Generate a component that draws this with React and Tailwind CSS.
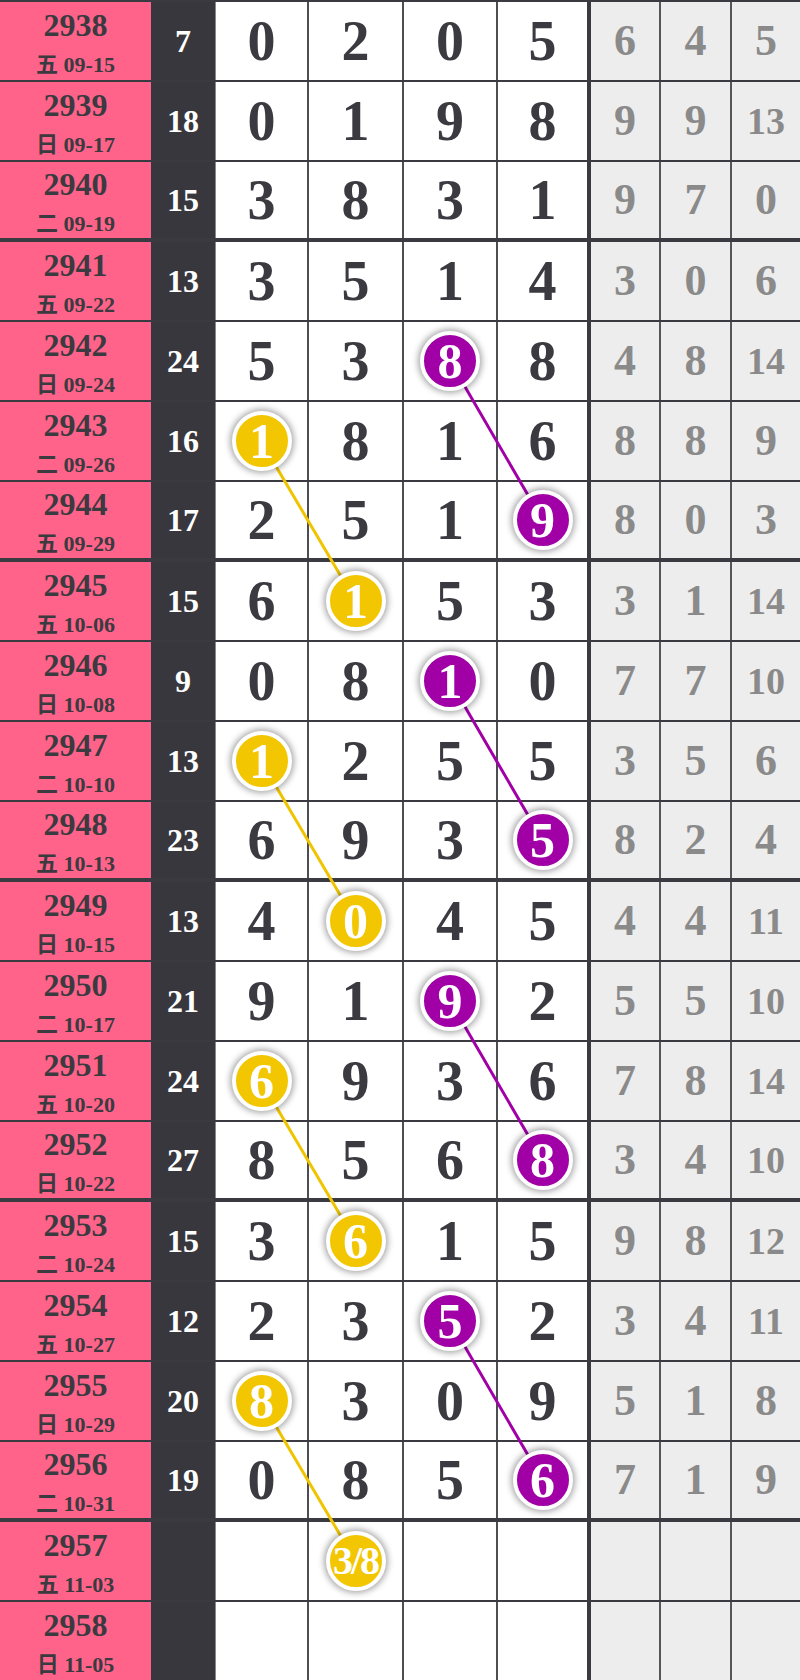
import React from "react"
import clsx from "clsx"

const rows = [
  ["2938", "五", "09-15", "7", ["0", "2", "0", "5"], ["6", "4", "5"]],
  ["2939", "日", "09-17", "18", ["0", "1", "9", "8"], ["9", "9", "13"]],
  ["2940", "二", "09-19", "15", ["3", "8", "3", "1"], ["9", "7", "0"]],
  ["2941", "五", "09-22", "13", ["3", "5", "1", "4"], ["3", "0", "6"]],
  ["2942", "日", "09-24", "24", ["5", "3", "p8", "8"], ["4", "8", "14"]],
  ["2943", "二", "09-26", "16", ["y1", "8", "1", "6"], ["8", "8", "9"]],
  ["2944", "五", "09-29", "17", ["2", "5", "1", "p9"], ["8", "0", "3"]],
  ["2945", "五", "10-06", "15", ["6", "y1", "5", "3"], ["3", "1", "14"]],
  ["2946", "日", "10-08", "9", ["0", "8", "p1", "0"], ["7", "7", "10"]],
  ["2947", "二", "10-10", "13", ["y1", "2", "5", "5"], ["3", "5", "6"]],
  ["2948", "五", "10-13", "23", ["6", "9", "3", "p5"], ["8", "2", "4"]],
  ["2949", "日", "10-15", "13", ["4", "y0", "4", "5"], ["4", "4", "11"]],
  ["2950", "二", "10-17", "21", ["9", "1", "p9", "2"], ["5", "5", "10"]],
  ["2951", "五", "10-20", "24", ["y6", "9", "3", "6"], ["7", "8", "14"]],
  ["2952", "日", "10-22", "27", ["8", "5", "6", "p8"], ["3", "4", "10"]],
  ["2953", "二", "10-24", "15", ["3", "y6", "1", "5"], ["9", "8", "12"]],
  ["2954", "五", "10-27", "12", ["2", "3", "p5", "2"], ["3", "4", "11"]],
  ["2955", "日", "10-29", "20", ["y8", "3", "0", "9"], ["5", "1", "8"]],
  ["2956", "二", "10-31", "19", ["0", "8", "5", "p6"], ["7", "1", "9"]],
  ["2957", "五", "11-03", "", ["", "y3/8", "", ""], ["", "", ""]],
  ["2958", "日", "11-05", "", ["", "", "", ""], ["", "", ""]],
]

// group breaks: thick line above these rows
const thickTop = [3, 7, 11, 15, 19]

const colX = [261, 355.5, 450, 542.5]
const rowY = i => (thickTop.includes(i + 1) ? 80 * i + 40 : 80 * i + 41)

const links = [
  ["#f0c400", 0, 5, 1, 7],
  ["#f0c400", 0, 9, 1, 11],
  ["#f0c400", 0, 13, 1, 15],
  ["#f0c400", 0, 17, 1, 19],
  ["#a000a6", 2, 4, 3, 6],
  ["#a000a6", 2, 8, 3, 10],
  ["#a000a6", 2, 12, 3, 14],
  ["#a000a6", 2, 16, 3, 18],
]

function Ball({ value }) {
  const yellow = value[0] === "y"
  const text = value.slice(1)
  return (
    <div
      className={clsx(
        "relative z-20 w-[60px] h-[60px] rounded-full border-4 border-white flex items-center justify-center text-white leading-none shadow-[0_0_6px_2px_rgba(0,0,0,0.35)]",
        yellow ? "bg-[#f2c600]" : "bg-[#a000a6]",
        text.length > 1 ? "text-[40px] tracking-[-2px]" : "text-[50px]"
      )}
    >
      {text}
    </div>
  )
}

export default function App() {
  return (
    <div className="relative w-[800px] bg-white font-bold font-['Liberation_Serif','Noto_Sans_CJK_SC',serif]">
      {rows.map(([no, day, date, sum, digits, rest], i) => (
        <div
          key={no}
          className={clsx(
            "grid grid-cols-[151px_64px_94px_95px_94px_93px_70px_71px_68px] h-[80px] border-t-2 border-[#3a3a40]",
            thickTop.includes(i + 1) && "border-b-2"
          )}
        >
          <div className="bg-[#ff6389] text-[#3a3a40] flex flex-col items-center justify-center pt-[2px]">
            <div className="text-[32px] leading-[32px]">{no}</div>
            <div className="text-[22px] leading-[22px] mt-[13px]">
              {day} {date}
            </div>
          </div>
          <div className="bg-[#38373d] text-white text-[32px] flex items-center justify-center">{sum}</div>
          {digits.map((d, j) => (
            <div
              key={j}
              className={clsx(
                "bg-white flex items-center justify-center text-[#3a3a40] text-[56px] leading-none",
                j === 0 && "border-l border-l-[#8a8a8e]",
                j === 3 ? "border-r-4 border-r-[#3a3a40]" : "border-r-2 border-r-[#4d4d52]"
              )}
            >
              {d[0] === "y" || d[0] === "p" ? <Ball value={d} /> : d}
            </div>
          ))}
          {rest.map((g, j) => (
            <div
              key={j}
              className={clsx(
                "bg-[#ededed] flex items-center justify-center text-[#8a8a8a] leading-none",
                j < 2 && "border-r-2 border-r-[#55555a]",
                g.length > 1 ? "text-[38px]" : "text-[44px]"
              )}
            >
              {g}
            </div>
          ))}
        </div>
      ))}
      <svg className="absolute inset-0 z-10 pointer-events-none" width="800" height="1680">
        {links.map(([c, c1, r1, c2, r2], k) => (
          <line key={k} x1={colX[c1]} y1={rowY(r1)} x2={colX[c2]} y2={rowY(r2)} stroke={c} strokeWidth="3" />
        ))}
      </svg>
    </div>
  )
}
